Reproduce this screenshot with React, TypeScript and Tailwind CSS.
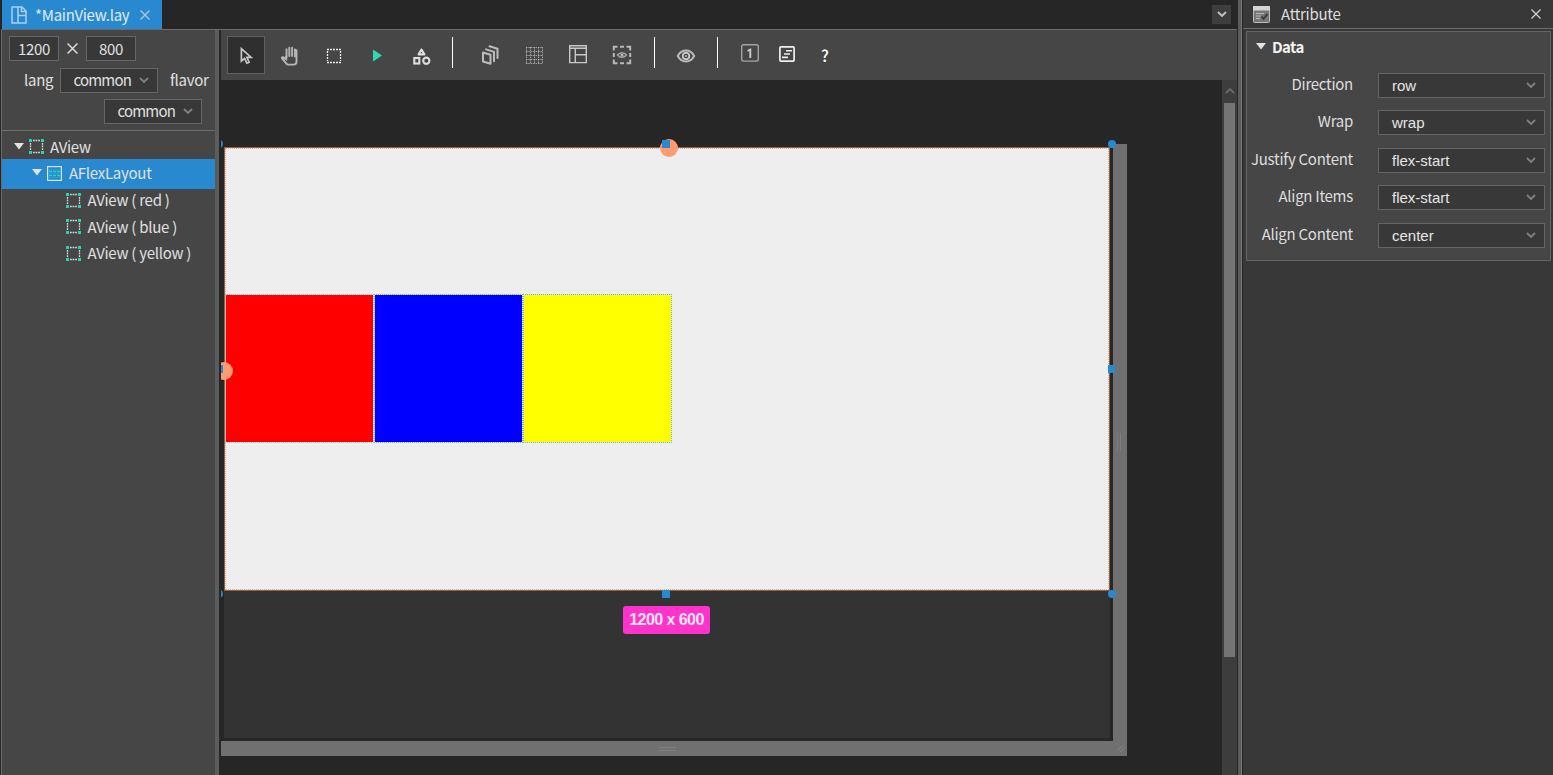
import type { ReactNode } from "react";

function Chevron({ className = "" }: { className?: string }) {
  return (
    <svg width="10" height="7" viewBox="0 0 10 7" className={`shrink-0 ${className}`} fill="none" stroke="currentColor" strokeWidth="1.8">
      <path d="M1 1l4 4 4-4" />
    </svg>
  );
}

function Cross({ size, className = "" }: { size: number; className?: string }) {
  return (
    <svg width={size} height={size} viewBox="0 0 10 10" className={`shrink-0 ${className}`} fill="none" stroke="currentColor" strokeWidth="1.3">
      <path d="M.5.5l9 9M9.5.5l-9 9" />
    </svg>
  );
}

function Caret({ className = "" }: { className?: string }) {
  return (
    <svg width="10" height="7" viewBox="0 0 10 7" className={`shrink-0 ${className}`} fill="#e2e2e2">
      <path d="M0 0h10L5 6.6z" />
    </svg>
  );
}

function Tool({ active = false, className = "", children }: { active?: boolean; className?: string; children: ReactNode }) {
  return (
    <div className={`h-[38px] w-[38px] shrink-0 ${active ? "bg-[#2f2f2f] outline outline-1 -outline-offset-1 outline-[#606060]" : ""} ${className}`}>
      <svg width="38" height="38" viewBox="0 0 38 38" fill="none">
        {children}
      </svg>
    </div>
  );
}

function Separator({ className = "" }: { className?: string }) {
  return <div className={`mt-px h-[31px] w-px shrink-0 bg-white ${className}`} />;
}

function Toolbar() {
  return (
    <div className="flex h-[50px] items-start bg-[#464646] pl-[6px] pt-[6px]">
      <Tool active>
        <path d="M14.4 12.6v12.6l3.200-2.900 2.200 4.900 2.300-1-2.200-4.800h4.200z" stroke="#c6c6c6" strokeWidth="1.7" />
      </Tool>
      <Tool className="ml-[6px]">
        <path
          d="M15.500 21.500v-8.300M18.300 20v-8.300M21.100 20v-8.300M24 20.500v-7"
          stroke="#b0b0b0"
          strokeWidth="2"
          strokeLinecap="round"
        />
        <path
          d="M15.2 20v3.2l-2.8-1.8c-.9-.5-1.9 0-1.3 1l4.3 5.2c.6.8 1.2 1 2.200 1h5c1.600 0 2.900-1.200 2.900-2.800v-11c0-1.200-1.700-1.200-1.700 0"
          stroke="#b8b8b8"
          strokeWidth="1.900"
        />
      </Tool>
      <Tool className="ml-[6px]">
        <path d="M12 13.500h14M12 26.500h14M12.500 15v10M25.500 15v10" stroke="#ececec" strokeWidth="1.300" strokeDasharray="2 1" />
      </Tool>
      <Tool className="ml-[6px]">
        <path d="M14 13.500v12l9-6z" fill="#31d6b2" />
      </Tool>
      <Tool className="ml-[6px]">
        <g stroke="#dedede" strokeWidth="2.100">
          <path d="M18.500 13.500l-2.900 4.900h5.800z" strokeLinejoin="round" />
          <rect x="11.300" y="22" width="5" height="5.500" />
          <circle cx="23.300" cy="24.700" r="3.100" />
        </g>
      </Tool>
      <Separator className="ml-[11px]" />
      <Tool className="ml-[18px]">
        <g stroke="#bcbcbc" strokeWidth="2" strokeLinejoin="round" strokeLinecap="round">
          <path d="M12 16.500l7.500 2.300v9l-7.500-2.300z" />
          <path d="M15 13.400l8 2.500v9.300" />
          <path d="M18.500 10.300l8 2.500v9.300" />
        </g>
      </Tool>
      <Tool className="ml-[6px]">
        <path
          d="M11 11.500h17M11 15.500h17M11 19.500h17M11 23.500h17M11 27.500h17M11.500 11v17M15.500 11v17M19.500 11v17M23.500 11v17M27.500 11v17"
          stroke="#b8b8b8"
          strokeWidth="1"
          strokeDasharray="1.500 .900"
          opacity=".8"
        />
      </Tool>
      <Tool className="ml-[6px]">
        <path d="M10.700 9.800h16.600v16.800H10.700zM10.700 12.300h16.600M16.300 12.500v14M16.300 18.800h11" stroke="#c8c8c8" strokeWidth="1.400" />
      </Tool>
      <Tool className="ml-[6px]">
        <path
          d="M14.500 10.800h-3.700v3.700M14.500 27.200h-3.700v-3.700M23.500 10.800h3.700v3.700M23.500 27.200h3.700v-3.700M17 10.800h4M17 27.200h4M10.800 17v4M27.200 17v4"
          stroke="#b8b8b8"
          strokeWidth="2"
        />
        <path d="M14.500 19c2.500-3 6.500-3 9 0-2.500 3-6.500 3-9 0z" stroke="#a5a5a5" strokeWidth="1.400" />
        <circle cx="19" cy="19" r="1.500" fill="#b9b9b9" />
      </Tool>
      <Separator className="ml-[13px]" />
      <Tool className="ml-[12px]">
        <path d="M10.800 20c4-7.300 12.400-7.300 16.400 0-4 7.300-12.400 7.300-16.400 0z" stroke="#bcbcbc" strokeWidth="2" />
        <circle cx="19" cy="20" r="3.300" stroke="#c8c8c8" strokeWidth="1.900" />
        <circle cx="19" cy="20" r="1" fill="#c0c0c0" />
      </Tool>
      <Separator className="ml-[12px]" />
      <Tool className="ml-[13px]">
        <rect x="10.700" y="8.700" width="16.600" height="16.400" rx="1.800" stroke="#a4a4a4" strokeWidth="1.400" />
        <path d="M16.500 15l2.800-1.500v8.500" stroke="#cacaca" strokeWidth="1.900" />
      </Tool>
      <Tool className="-ml-px">
        <rect x="11.900" y="10.900" width="14.200" height="14.200" rx="1" stroke="#efefef" strokeWidth="1.700" />
        <path d="M18 14.700h6M16 18h6M14 21.400h6" stroke="#efefef" strokeWidth="1.600" />
      </Tool>
      <div className="-mt-[2px] flex h-[38px] w-[38px] items-center justify-center pt-[3px] font-['Noto_Sans_CJK_KR',sans-serif] text-[16px] font-medium text-white">
        ?
      </div>
    </div>
  );
}

function ViewIcon() {
  return (
    <svg width="15" height="15" viewBox="0 0 15 15" className="shrink-0">
      <path d="M4 1.500h7M4 13.500h7M1.500 4v7M13.500 4v7" stroke="#dcdcdc" strokeWidth="1.300" strokeDasharray="1.700 .9" />
      <path d="M0 0h3v3H0zM12 0h3v3h-3zM0 12h3v3H0zM12 12h3v3h-3z" fill="#25d3b5" />
    </svg>
  );
}

function FlexIcon() {
  return (
    <svg width="15" height="15" viewBox="0 0 15 15" className="shrink-0" fill="none">
      <rect x=".6" y=".6" width="13.800" height="13.800" stroke="#dbe7f0" strokeWidth="1.200" />
      <path d="M2 5.500h11M2 9.500h11" stroke="#25d3c5" strokeWidth="1.500" strokeDasharray="3 1" />
      <path d="M2 3.500h11M2 7.500h11M2 11.500h11" stroke="#25a5d0" strokeWidth=".8" />
    </svg>
  );
}

const views = ["red", "blue", "yellow"];

function LeftSelect({ className = "" }: { className?: string }) {
  return (
    <div className={`flex h-[25px] w-[98px] items-center border border-[#666] bg-[#383838] pl-[12.500px] ${className}`}>
      <span className="w-[65px] shrink-0 pb-[2px] tracking-[-0.8px]">common</span>
      <Chevron className="-mt-px text-[#808080]" />
    </div>
  );
}

function LeftPanel() {
  return (
    <div className="ml-px flex h-full w-[214px] shrink-0 flex-col border-l border-[#6c6c6c] bg-[#464646] font-['Noto_Sans_CJK_KR',sans-serif] text-[15px] leading-[24px] tracking-[-0.27px] text-[#e0e0e0]">
      <div className="h-[101px] border-b border-[#6c6c6c]">
        <div className="flex items-center pl-[7px] pt-[6px]">
          <div className="flex h-[25px] w-[50px] items-center justify-center border border-[#666] bg-[#383838]">1200</div>
          <Cross size={11} className="ml-[8px] mr-[8px]" />
          <div className="flex h-[25px] w-[50px] items-center justify-center border border-[#666] bg-[#383838]">800</div>
        </div>
        <div className="mt-[7px] flex h-[25px] items-center pl-[22px]">
          <span className="w-[36px] pb-px">lang</span>
          <LeftSelect />
          <span className="ml-[12px] pb-px">flavor</span>
        </div>
        <LeftSelect className="ml-[102px] mt-[6px]" />
      </div>
      <div className="flex h-[28px] items-center pl-[12px] pt-[3px]">
        <Caret className="-mt-px" />
        <span className="ml-[5px] flex items-center">
          <ViewIcon />
        </span>
        <span className="ml-[6px]">AView</span>
      </div>
      <div className="flex h-[30px] items-center bg-[#2989d0] pl-[30px]">
        <Caret className="-mt-[3px]" />
        <span className="-mt-px ml-[5px]">
          <FlexIcon />
        </span>
        <span className="ml-[7px] pb-[2px]">AFlexLayout</span>
      </div>
      <div className="-mt-[2.200px] flex flex-col">
        {views.map((name) => (
          <div key={name} className="flex h-[26.500px] items-center pl-[64px]">
            <ViewIcon />
            <span className="ml-[6.500px]">AView ( {name} )</span>
          </div>
        ))}
      </div>
    </div>
  );
}

function Canvas() {
  return (
    <div className="relative h-[695px] w-[1001px] shrink-0 overflow-hidden bg-[#262626]">
      <div className="absolute left-0 top-[64px] h-[612px] w-[906px] border-b-[15px] border-r-[14px] border-[#707070]" />
      <div className="absolute left-[3px] top-[68px] h-[590px] w-[886px] bg-[#333]" />
      <div className="absolute left-[3px] top-[67px] h-[444px] w-[886px] border border-[#96603f] bg-[#eee] pb-px outline outline-1 -outline-offset-2 outline-dotted outline-[#dcae94]">
        <div className="flex h-full flex-wrap content-center items-start justify-start">
          <div className="size-[149px] border border-dotted border-[#8fd0cd] bg-[#f00] bg-clip-padding" />
          <div className="size-[149px] border border-dotted border-[#6fb0cf] bg-[#00f] bg-clip-padding" />
          <div className="size-[149px] border border-dotted border-[#62bdb9] bg-[#ff0] bg-clip-padding" />
        </div>
      </div>
      <div className="absolute left-[439px] top-[59px] size-[18px] rounded-full bg-[#ff9b70]" />
      <div className="absolute -left-[6px] top-[282px] size-[18px] rounded-full bg-[#ff9b70]" />
      <div className="absolute left-[441px] top-[60px] size-[8px] bg-[#2989d0]" />
      <div className="absolute -left-[6px] top-[285px] size-[8px] bg-[#2989d0]" />
      <div className="absolute left-[441px] top-[510px] size-[8px] bg-[#2989d0]" />
      <div className="absolute left-[887px] top-[285px] h-[8px] w-[7px] bg-[#2989d0]" />
      <div className="absolute left-[887px] top-[60px] size-[8px] rounded-full bg-[#2989d0]" />
      <div className="absolute left-[887px] top-[510px] size-[8px] rounded-full bg-[#2989d0]" />
      <div className="absolute -left-[6px] top-[60px] size-[8px] rounded-full bg-[#2989d0]" />
      <div className="absolute -left-[6px] top-[510px] size-[8px] rounded-full bg-[#2989d0]" />
      <div className="absolute left-[402px] top-[526px] flex h-[28px] w-[87px] items-center justify-center whitespace-nowrap rounded-[3px] bg-[#ff32cc] font-['Liberation_Sans',sans-serif] text-[16px] font-bold tracking-[-0.55px] text-[#ffe6f8]">
        1200 x 600
      </div>
      <div className="absolute left-[437px] top-[667px] h-[4px] w-[18px] border-y border-[#7e7e7e]" />
      <div className="absolute left-[896px] top-[353px] h-[18px] w-[4px] border-x border-[#7e7e7e]" />
      <svg className="absolute left-[895px] top-[665px]" width="9" height="8" viewBox="0 0 9 8" stroke="#858585">
        <path d="M1 6l6-5.500M4 7l4-3.500" />
      </svg>
    </div>
  );
}

function Editor() {
  return (
    <div className="flex h-full w-[1016px] shrink-0 flex-col">
      <Toolbar />
      <div className="flex flex-1">
        <Canvas />
        <div className="flex w-[15px] flex-col items-center bg-[#3d3d3d] pt-[7px]">
          <Chevron className="rotate-180 text-[#696969]" />
          <div className="mt-[9px] h-[554px] w-[11px] bg-[#747474]" />
        </div>
      </div>
    </div>
  );
}

function TabBar() {
  return (
    <div className="ml-px flex h-[30px] items-start border-b border-[#6c6c6c] bg-[#262626]">
      <div className="ml-px flex h-[29px] w-[160px] items-center bg-[#2989d0] pl-[9px] font-['Noto_Sans_CJK_KR',sans-serif] text-[15px] leading-[24px] tracking-[-0.27px] text-[#e0ecf5]">
        <svg width="16" height="18" viewBox="0 0 16 18" className="shrink-0" fill="none" stroke="#a9d0ee" strokeWidth="1.500">
          <path d="M1 1h10l4 4v12H1zM7 1v16M7 9.500h8M10.500 1v4.500H15" />
        </svg>
        <span className="ml-[8px] w-[96px] shrink-0 pt-px">*MainView.lay</span>
        <Cross size={10} className="ml-[9px] text-[#a5cae6]" />
      </div>
      <div className="ml-auto mr-[6px] mt-[5px] flex h-[19px] w-[19px] items-center justify-center bg-[#3e3e3e]">
        <Chevron className="text-[#c4c4c4]" />
      </div>
    </div>
  );
}

const attributes = [
  { label: "Direction", value: "row" },
  { label: "Wrap", value: "wrap" },
  { label: "Justify Content", value: "flex-start" },
  { label: "Align Items", value: "flex-start" },
  { label: "Align Content", value: "center" },
];

function AttributePanel() {
  return (
    <div className="flex h-full w-[310px] shrink-0 flex-col bg-[#383838] font-['Noto_Sans_CJK_KR',sans-serif] text-[15px] leading-[24px] tracking-[-0.27px] text-[#dedede]">
      <div className="flex h-[29px] shrink-0 items-center border-b border-[#6c6c6c] pl-[10px] pr-[12px]">
        <svg width="17" height="17" viewBox="0 0 17 17">
          <rect x=".5" y=".5" width="16" height="16" rx="1" fill="#777" stroke="#b9b9b9" />
          <path d="M0 0h17v4.500H0z" fill="#d5d5d5" />
          <path d="M3 7.500h8M3 10h5M3 12.500h4" stroke="#b8b8b8" strokeWidth="1.200" />
          <path d="M8.500 10.500l2 2.300 4-4.800" fill="none" stroke="#3d3d3d" strokeWidth="2" />
        </svg>
        <span className="ml-[11px] pb-px">Attribute</span>
        <Cross size={10} className="ml-auto text-[#cfcfcf]" />
      </div>
      <div className="ml-[3px] mt-[2px] h-[230px] w-[305px] border border-[#646464] bg-[#464646]">
        <div className="flex h-[30px] items-center pl-[9px] font-bold tracking-[-0.6px] text-[#f2f2f2]">
          <Caret className="-mt-px" />
          <span className="ml-[6px] pb-px">Data</span>
        </div>
        <div className="mt-[10.900px] flex flex-col gap-[12.500px]">
          {attributes.map(({ label, value }) => (
            <div key={label} className="flex h-[25px] items-center">
              <span className="w-[106px] whitespace-nowrap pb-[3px] text-right">{label}</span>
              <div className="ml-[25px] flex h-[25px] w-[167px] items-center border border-[#646464] bg-[#383838] pl-[13px] pt-px font-['Liberation_Sans',sans-serif] text-[15px] tracking-normal text-[#e6e6e6]">
                {value}
                <Chevron className="-mt-px ml-auto mr-[8px] text-[#808080]" />
              </div>
            </div>
          ))}
        </div>
      </div>
    </div>
  );
}

export default function App() {
  return (
    <div className="flex h-[775px] w-[1553px] overflow-hidden bg-[#262626]">
      <div className="flex h-full w-[1237px] shrink-0 flex-col">
        <TabBar />
        <div className="flex h-[745px]">
          <LeftPanel />
          <div className="mr-[2px] w-[4px] shrink-0 bg-[#5c5c5c]" />
          <Editor />
        </div>
      </div>
      <div className="ml-px mr-px h-full w-[4px] shrink-0 border-r border-[#777] bg-[#5c5c5c]" />
      <AttributePanel />
    </div>
  );
}
